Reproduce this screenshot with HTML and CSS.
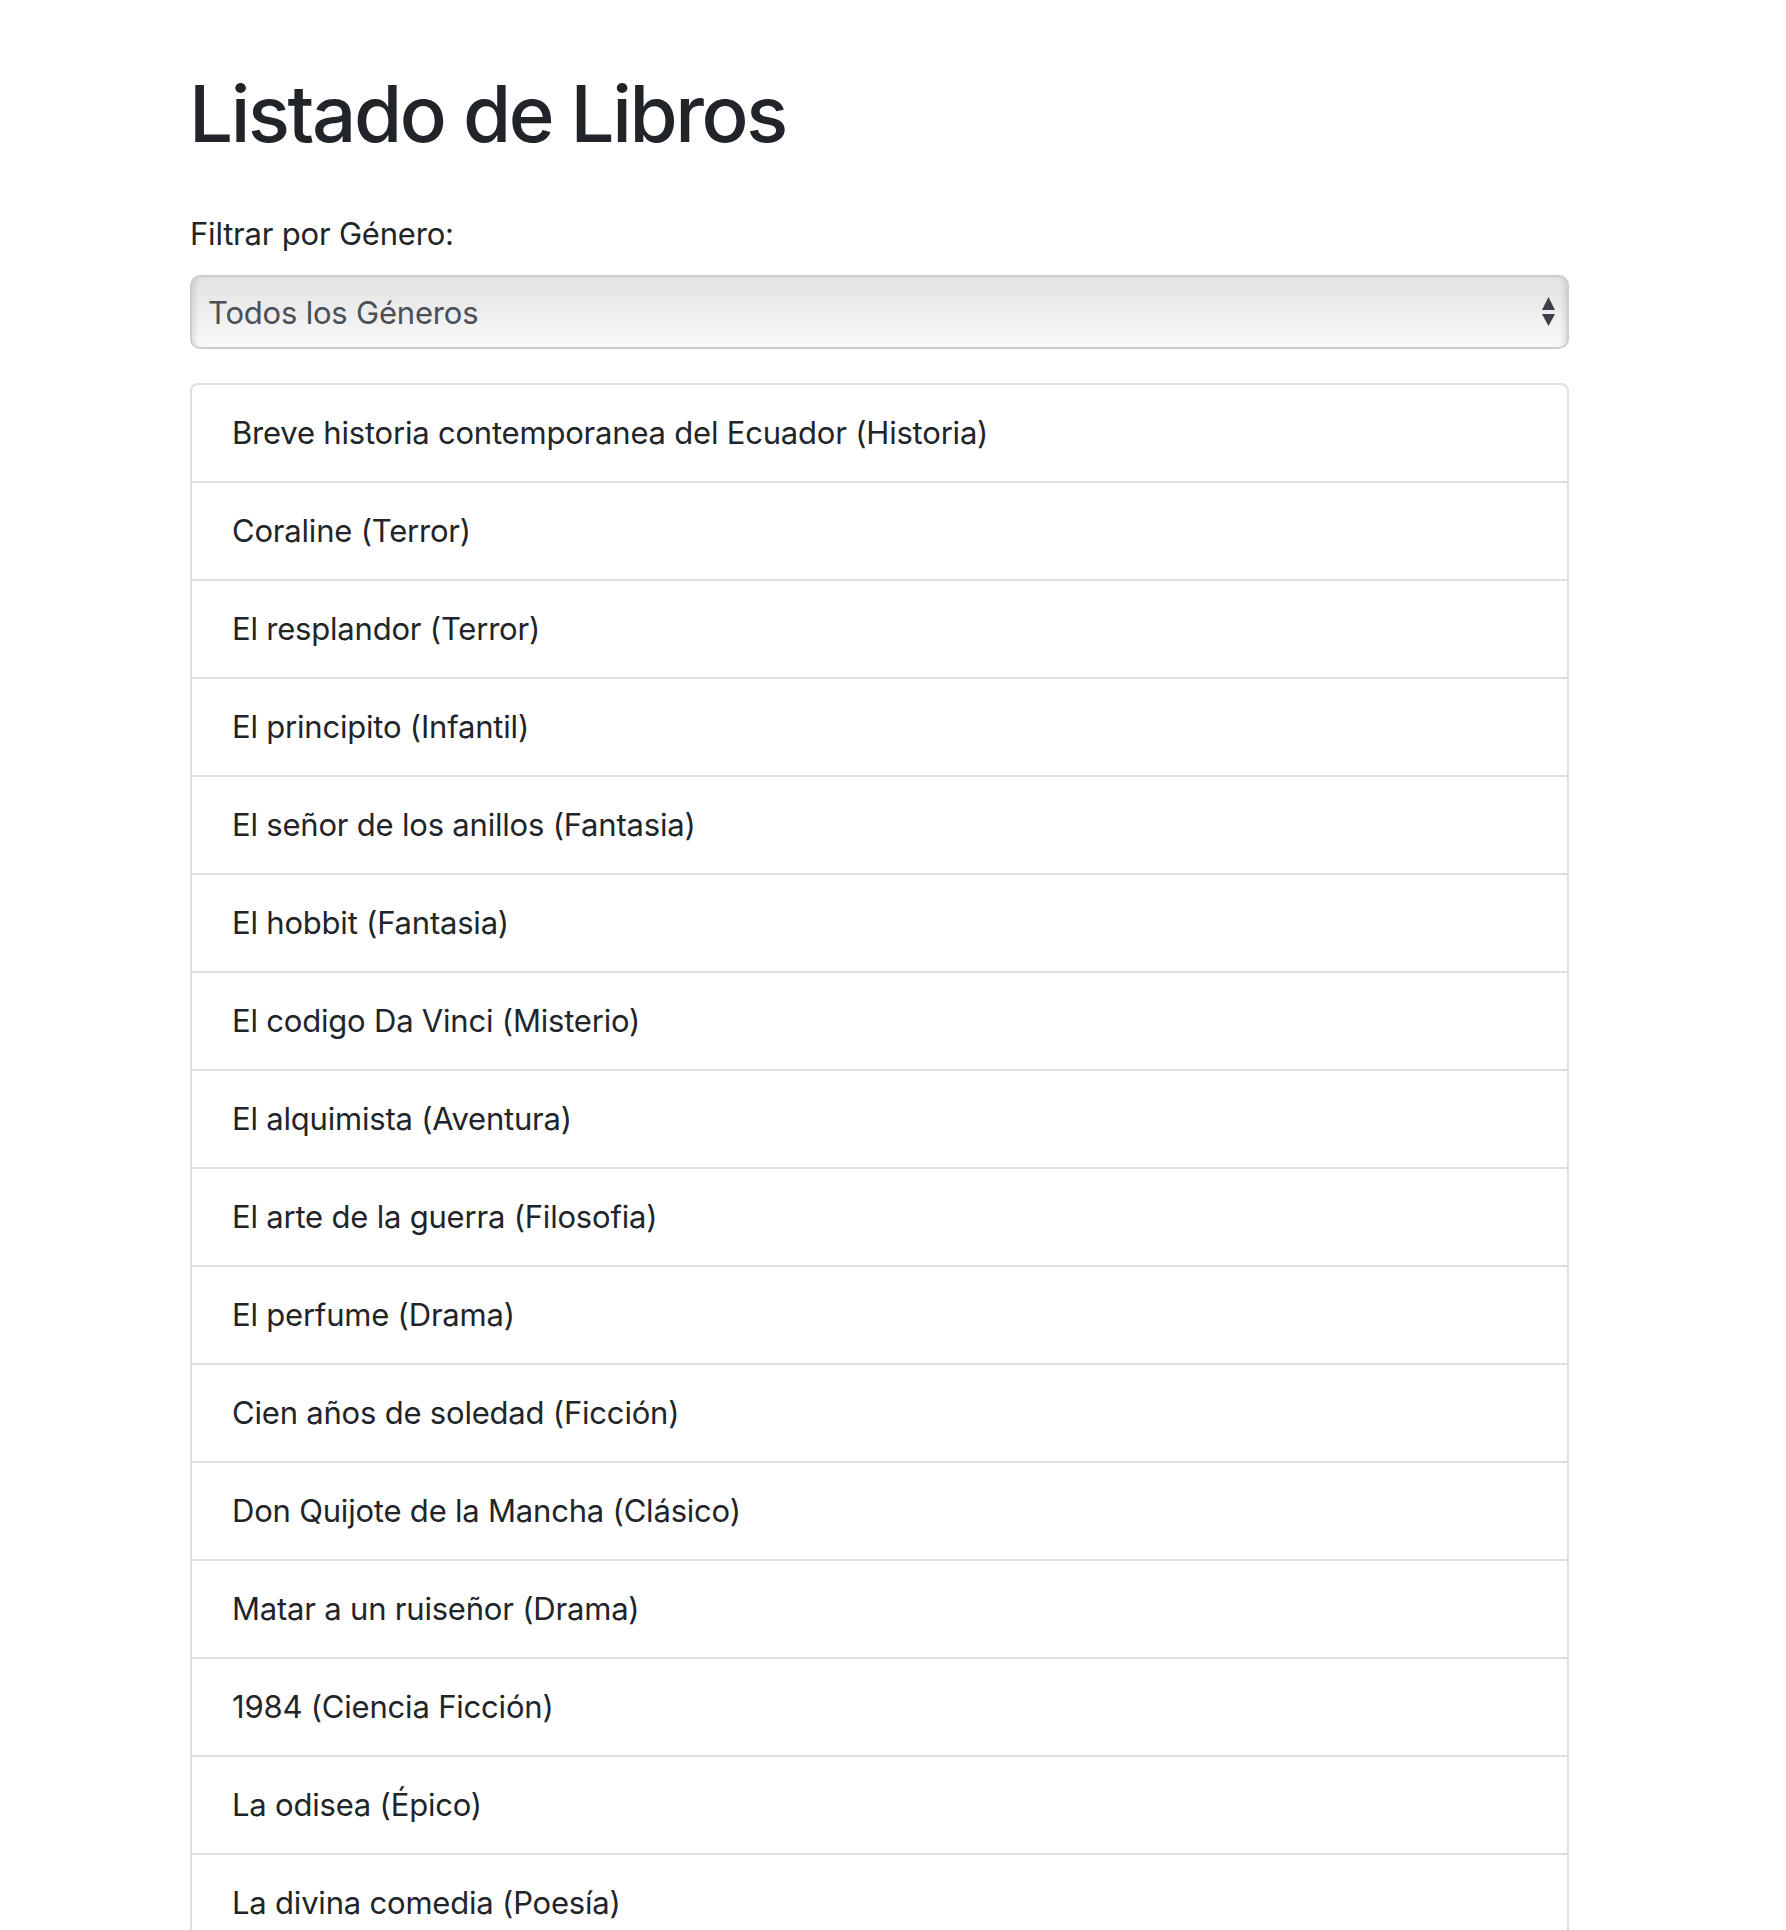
FILE: index.html
```html
<!DOCTYPE html>
<html lang="es">
<head>
<meta charset="utf-8">
<title>Listado de Libros</title>
<link rel="stylesheet" href="styles.css">
</head>
<body>
<div class="container">
  <h1 class="title">Listado de Libros</h1>
  <div class="form-group">
    <label class="label" for="genero">Filtrar por Género:</label>
    <div class="select-wrap">
      <select id="genero" class="select">
        <option>Todos los Géneros</option>
      </select>
      <svg class="select-arrows" width="13" height="29" viewBox="0 0 13 29" aria-hidden="true">
        <polygon points="0,13 6.5,0 13,13" />
        <polygon points="0,17 13,17 6.5,29" />
      </svg>
    </div>
  </div>
  <ul class="list-group">
    <li class="list-item">Breve historia contemporanea del Ecuador (Historia)</li>
    <li class="list-item">Coraline (Terror)</li>
    <li class="list-item">El resplandor (Terror)</li>
    <li class="list-item">El principito (Infantil)</li>
    <li class="list-item">El señor de los anillos (Fantasia)</li>
    <li class="list-item">El hobbit (Fantasia)</li>
    <li class="list-item">El codigo Da Vinci (Misterio)</li>
    <li class="list-item">El alquimista (Aventura)</li>
    <li class="list-item">El arte de la guerra (Filosofia)</li>
    <li class="list-item">El perfume (Drama)</li>
    <li class="list-item">Cien años de soledad (Ficción)</li>
    <li class="list-item">Don Quijote de la Mancha (Clásico)</li>
    <li class="list-item">Matar a un ruiseñor (Drama)</li>
    <li class="list-item">1984 (Ciencia Ficción)</li>
    <li class="list-item">La odisea (Épico)</li>
    <li class="list-item">La divina comedia (Poesía)</li>
  </ul>
</div>
</body>
</html>
```

FILE: styles.css
```css
* { box-sizing: border-box; }

html, body {
  margin: 0;
  background: #ffffff;
}

body {
  font-family: Inter, "Noto Sans", "Liberation Sans", sans-serif;
  color: #212529;
  font-size: 31px;
  line-height: 48px;
  letter-spacing: -0.2px;
}

.container {
  margin: 0 217px 0 190px;
  padding-top: 66px;
}

.title {
  margin: 0 0 48px -1px;
  font-size: 78px;
  line-height: 96px;
  font-weight: 500;
  letter-spacing: -2.4px;
  color: #212529;
}

.form-group {
  margin-bottom: 34px;
}

.label {
  display: block;
  margin-bottom: 17px;
  font-size: 31px;
  line-height: 48px;
}

.select-wrap {
  position: relative;
}

.select {
  display: block;
  width: 100%;
  height: 74px;
  margin: 0;
  padding: 0 60px 0 16px;
  -webkit-appearance: none;
  appearance: none;
  font-family: inherit;
  font-size: 31px;
  letter-spacing: -0.2px;
  color: #495057;
  border: 2px solid #c9ced4;
  border-radius: 10px;
  background: linear-gradient(#e3e3e3 0%, #ececec 45%, #fafafa 100%);
  box-shadow: inset 7px 0 6px -5px rgba(0, 0, 0, 0.12), inset -7px 0 6px -5px rgba(0, 0, 0, 0.12);
  outline: none;
}

.select-arrows {
  position: absolute;
  right: 14px;
  top: 22px;
  fill: #3c4047;
  pointer-events: none;
}

.list-group {
  list-style: none;
  margin: 0;
  padding: 0;
  border: 2px solid #dfdfdf;
  border-radius: 8px;
}

.list-item {
  padding: 24px 40px;
  font-size: 31px;
  line-height: 48px;
  border-bottom: 2px solid #dfdfdf;
}

.list-item:last-child {
  border-bottom: 0;
}
```
